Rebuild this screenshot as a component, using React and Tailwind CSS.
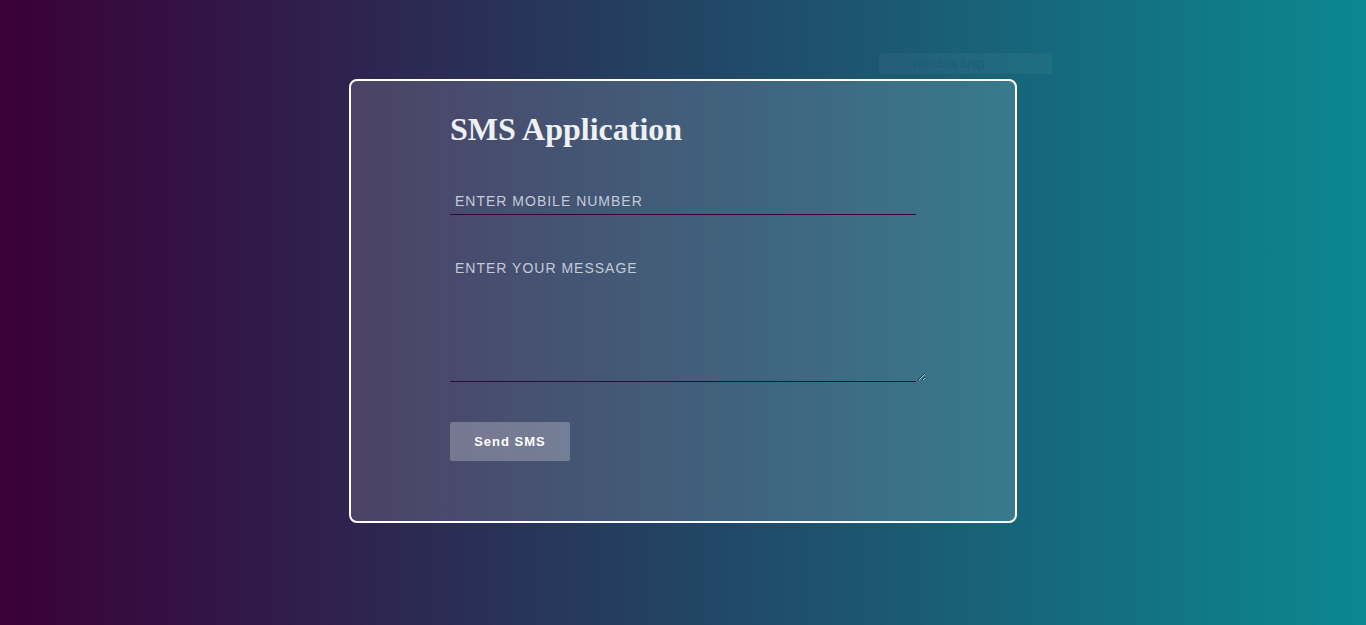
import React from 'react';

const App = () => {
  return (
    <div className="relative min-h-[625px] w-full bg-[linear-gradient(to_right,#3a0037,#0b8891)] pt-[79px] font-['Liberation_Sans',Arial,sans-serif]">
      <div className="absolute left-[879px] top-[53px] flex h-[21px] w-[173px] items-center rounded-[2px] bg-white/[0.04] pl-[33px] text-[12px] text-[#1b5c74] font-['Open_Sans',sans-serif]">
        Window Snip
      </div>

      <div className="mx-auto w-[668px] rounded-[8px] border-2 border-white bg-white/[0.14] px-[99px] pt-[30px] pb-[60px]">
        <h1 className="font-['Liberation_Serif','Times_New_Roman',serif] text-[32px] font-bold leading-[37px] text-[#eef0f2]">
          SMS Application
        </h1>

        <input
          type="text"
          placeholder="ENTER MOBILE NUMBER"
          className="mt-[38px] block h-[29px] w-[466px] border-b border-[#3a0038] bg-transparent px-[5px] pt-[1px] text-[14px] tracking-[1px] text-white outline-none placeholder:text-[#c2ccd8]"
        />

        <div className="mt-[40px]">
          <textarea
            placeholder="ENTER YOUR MESSAGE"
            className="block h-[126px] w-[476px] bg-transparent px-[5px] pt-[5px] text-[14px] leading-[16px] tracking-[1px] text-white outline-none placeholder:text-[#c2ccd8]"
          />
          <div className="h-px w-[466px] bg-[#2a0b3a]"></div>
        </div>

        <button className="mt-[40px] h-[39px] w-[120px] rounded-[2px] bg-white/25 text-[13px] font-bold tracking-[1px] text-white">
          Send SMS
        </button>
      </div>
    </div>
  );
};

export default App;
